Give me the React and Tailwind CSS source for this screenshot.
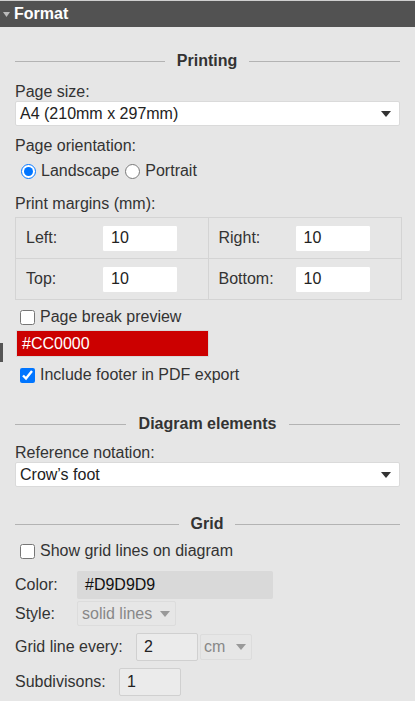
import React from "react";

const font = { fontFamily: '"Liberation Sans", Arial, sans-serif' };

const Section = ({ title, left, right }) => (
  <div className="flex items-center h-[18px]">
    <div className={`h-px bg-[#b3b3b3] ${left}`} />
    <div className="flex-1 text-center font-bold text-[#333]">{title}</div>
    <div className={`h-px bg-[#b3b3b3] ${right}`} />
  </div>
);

const Caret = ({ color = "#333" }) => (
  <svg width="10" height="6" viewBox="0 0 10 6">
    <path d="M0 0 L10 0 L5 6 Z" fill={color} />
  </svg>
);

const Select = ({ value }) => (
  <div className="flex items-center justify-between h-[25px] bg-white border border-[#dadada] rounded-[2px] pl-[4px] pr-[8px] text-[#222]">
    <span>{value}</span>
    <Caret />
  </div>
);

const MarginCell = ({ label, value, left }) => (
  <div className={`flex items-center h-[40px] ${left ? "border-r border-[#d4d4d4]" : ""}`}>
    <span className="w-[86px] pl-[10px] text-[#333]">{label}</span>
    <div className="w-[76px] h-[27px] bg-white rounded-[2px] border border-[#e6e6e6] flex items-center pl-[8px] text-[#222]">
      {value}
    </div>
  </div>
);

export default function App() {
  return (
    <div className="w-[415px] h-[701px] bg-[#e6e6e6] text-[16px] leading-[18px] relative overflow-hidden" style={font}>
      <div className="h-[27px] bg-[#525252] border-t border-[#cfcfcf] flex items-center text-white font-bold text-[16px]">
        <svg width="7" height="5" viewBox="0 0 7 5" className="ml-[3px] mr-[4px]">
          <path d="M0 0 L7 0 L3.5 5 Z" fill="#bbb" />
        </svg>
        Format
      </div>

      <div className="px-[15px] text-[#333]">
        <div className="mt-[25px]">
          <Section title="Printing" left="w-[150px]" right="w-[151px]" />
        </div>

        <div className="mt-[13px]">Page size:</div>
        <Select value="A4 (210mm x 297mm)" />

        <div className="mt-[11px]">Page orientation:</div>
        <div className="flex items-center mt-[7px] pl-[6px]">
          <input type="radio" name="o" defaultChecked className="w-[15px] h-[15px] m-0" />
          <span className="ml-[5px]">Landscape</span>
          <input type="radio" name="o" className="w-[15px] h-[15px] m-0 ml-[6px]" />
          <span className="ml-[5px]">Portrait</span>
        </div>

        <div className="mt-[15px]">Print margins (mm):</div>
        <div className="mt-[4px] grid grid-cols-2 border border-[#d4d4d4] w-[387px]">
          <div className="border-b border-[#d4d4d4]"><MarginCell label="Left:" value="10" left /></div>
          <div className="border-b border-[#d4d4d4]"><MarginCell label="Right:" value="10" /></div>
          <MarginCell label="Top:" value="10" left />
          <MarginCell label="Bottom:" value="10" />
        </div>

        <div className="flex items-center mt-[8px] pl-[5px]">
          <input type="checkbox" className="w-[15px] h-[15px] m-0" />
          <span className="ml-[5px]">Page break preview</span>
        </div>
        <div className="mt-[4px] ml-[1px] w-[193px] h-[27px] bg-[#cc0000] border border-[#d8d8d8] flex items-center pl-[5px] text-white">
          #CC0000
        </div>
        <div className="flex items-center mt-[9px] pl-[5px]">
          <input type="checkbox" defaultChecked className="w-[15px] h-[15px] m-0" />
          <span className="ml-[5px]">Include footer in PDF export</span>
        </div>

        <div className="mt-[31px]">
          <Section title="Diagram elements" left="w-[111px]" right="w-[111px]" />
        </div>
        <div className="mt-[11px]">Reference notation:</div>
        <Select value="Crow’s foot" />

        <div className="mt-[28px]">
          <Section title="Grid" left="w-[164px]" right="w-[165px]" />
        </div>
        <div className="flex items-center mt-[9px] pl-[5px]">
          <input type="checkbox" className="w-[15px] h-[15px] m-0" />
          <span className="ml-[5px]">Show grid lines on diagram</span>
        </div>

        <div className="flex items-center mt-[11px]">
          <span className="w-[62px]">Color:</span>
          <div className="w-[196px] h-[28px] bg-[#d9d9d9] rounded-[2px] flex items-center pl-[8px] text-[#111]">#D9D9D9</div>
        </div>
        <div className="flex items-center mt-[2px]">
          <span className="w-[62px]">Style:</span>
          <div className="w-[99px] h-[25px] border border-[#dcdcdc] rounded-[2px] flex items-center pl-[4px] text-[#888]">
            <span>solid lines</span>
            <span className="ml-[8px]"><Caret color="#999" /></span>
          </div>
        </div>
        <div className="flex items-center mt-[7px]">
          <span className="w-[121px]">Grid line every:</span>
          <div className="w-[62px] h-[28px] bg-[#ebebeb] border border-[#d0d0d0] rounded-[2px] flex items-center pl-[7px] text-[#222]">2</div>
          <div className="ml-[2px] w-[52px] h-[26px] border border-[#dcdcdc] rounded-[2px] flex items-center pl-[3px] text-[#888]">
            <span>cm</span>
            <span className="ml-[11px]"><Caret color="#999" /></span>
          </div>
        </div>
        <div className="flex items-center mt-[7px]">
          <span className="w-[104px]">Subdivisons:</span>
          <div className="w-[62px] h-[28px] bg-[#ebebeb] border border-[#d0d0d0] rounded-[2px] flex items-center pl-[7px] text-[#222]">1</div>
        </div>
      </div>

      <div className="absolute left-0 top-[343px] w-[3px] h-[19px] bg-[#555]" />
    </div>
  );
}
